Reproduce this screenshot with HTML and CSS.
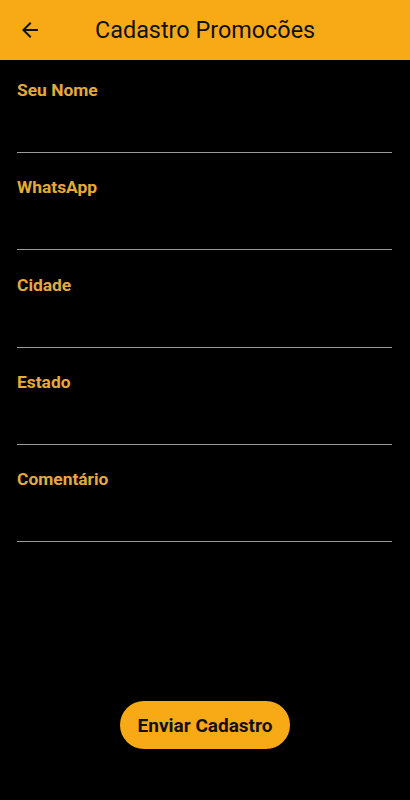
FILE: index.html
```html
<!DOCTYPE html>
<html lang="pt-BR">
<head>
<meta charset="utf-8">
<title>Cadastro Promocões</title>
<link rel="stylesheet" href="styles.css">
</head>
<body>
<div class="app">
  <header class="appbar">
    <span class="back">
      <svg width="24" height="24" viewBox="0 0 24 24"><path d="M20 11H7.83l5.59-5.59L12 4l-8 8 8 8 1.41-1.41L7.83 13H20v-2z" fill="#111"/></svg>
    </span>
    <h1 class="title">Cadastro Promocões</h1>
  </header>
  <form class="form">
    <div class="field"><label class="label">Seu Nome</label><div class="input"></div></div>
    <div class="field"><label class="label">WhatsApp</label><div class="input"></div></div>
    <div class="field"><label class="label">Cidade</label><div class="input"></div></div>
    <div class="field"><label class="label">Estado</label><div class="input"></div></div>
    <div class="field"><label class="label">Comentário</label><div class="input"></div></div>
  </form>
  <div class="actions">
    <button class="submit" type="button">Enviar Cadastro</button>
  </div>
</div>
</body>
</html>
```
FILE: styles.css
```css
html, body {
  margin: 0;
  padding: 0;
  background: #000;
}
body {
  font-family: Roboto, "Liberation Sans", sans-serif;
}
.app {
  display: flex;
  flex-direction: column;
  min-height: 800px;
}
.appbar {
  height: 60px;
  background: #F7AA15;
  display: flex;
  align-items: center;
  padding-left: 18px;
  box-sizing: border-box;
}
.back {
  width: 24px;
  height: 24px;
  display: flex;
}
.title {
  margin: 0 0 0 53px;
  font-size: 23.4px;
  font-weight: 400;
  color: #111;
  line-height: 28px;
}
.form {
  padding: 20px 18px 0 17px;
  display: flex;
  flex-direction: column;
  gap: 24.25px;
}
.field {
  display: flex;
  flex-direction: column;
}
.label {
  font-size: 17.4px;
  line-height: 20px;
  font-weight: 700;
  color: #E6A93A;
}
.input {
  height: 52px;
  border-bottom: 1px solid #9a9a9a;
}
.actions {
  margin-top: auto;
  display: flex;
  justify-content: center;
  padding-bottom: 51px;
}
.submit {
  width: 170px;
  height: 48px;
  border: none;
  border-radius: 24px;
  background: #F7AA15;
  color: #111;
  font-family: Roboto, "Liberation Sans", sans-serif;
  font-size: 19px;
  font-weight: 700;
  padding: 0;
}
```
